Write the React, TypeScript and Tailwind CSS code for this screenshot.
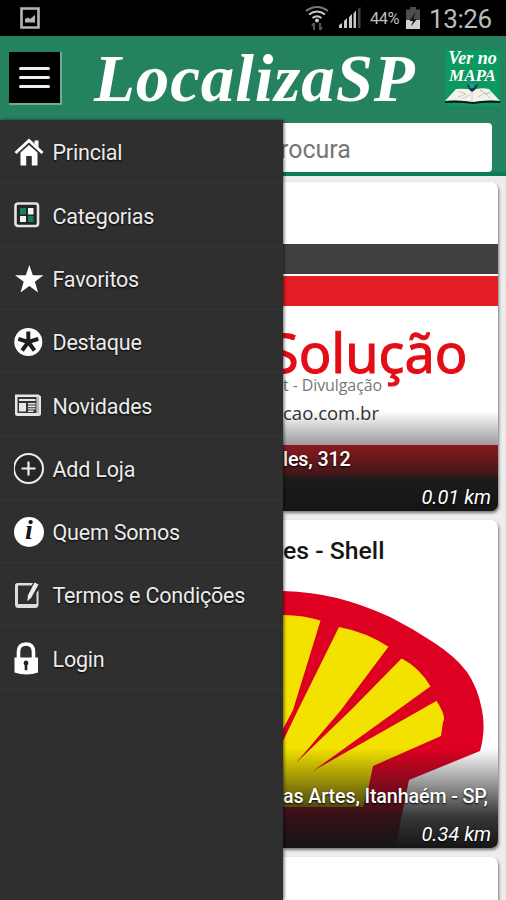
import { ReactNode } from "react";

const HomeIcon = () => (
  <svg viewBox="0 0 30 30" className="size-[30px]">
    <path d="M20.500 3.500h4v7l-4-4z" fill="#fff" />
    <path d="M1.500 16 15 3.500 28.500 16" fill="none" stroke="#fff" strokeWidth="3" />
    <path d="M6.500 15.500 15 8l8.500 7.500V28.500h-5.700V19h-5.600v9.500H6.500z" fill="#fff" />
  </svg>
);

const CategoriesIcon = () => (
  <svg viewBox="0 0 30 30" className="size-[30px]">
    <rect x="1.500" y="3.500" width="22.500" height="22.500" rx="2.500" fill="#252525" stroke="#e4e4e4" strokeWidth="2.600" />
    <path d="M6 8h6v6.500H6zM14 16h5.500v6H14z" fill="#14805c" />
    <path d="M14 8h5.500v6.500H14zM6 16h6v6H6z" fill="#f2f2f2" />
  </svg>
);

const StarIcon = () => (
  <svg viewBox="0 0 30 30" className="size-[30px]">
    <path d="m15.300 1 3.500 10.200h10.700l-8.600 6.500 3.200 10.800-8.800-6.500-8.800 6.500 3.200-10.800L1 11.200h10.800z" fill="#fff" />
  </svg>
);

const FeaturedIcon = () => (
  <svg viewBox="0 0 30 30" className="size-[30px]">
    <circle cx="14.300" cy="15" r="14" fill="#fff" />
    <g stroke="#1f1f1f" strokeWidth="4">
      <path d="M14.300 15V4.500M14.300 15l10-3.200M14.300 15l6.200 8.500M14.300 15l-6.200 8.500M14.300 15l-10-3.200" />
    </g>
  </svg>
);

const NewsIcon = () => (
  <svg viewBox="0 0 30 30" className="size-[30px]">
    <path d="M1 4.500h23.500l2.500 2v17q0 2.500-2.500 2.500H3.500Q1 26 1 23.500V4.500z" fill="#e6e6e6" />
    <path d="M3.500 7h19v16h-19z" fill="#333" />
    <path d="M5 9h16.500v2H5zM5 13h7v8.500H5zM14 13h7.500v1.600H14zM14 15.600h7.500v1.600H14zM14 18.200h7.500v1.400H14zM14 20.500h5.500V22H14z" fill="#e6e6e6" />
    <path d="M24 6.500v17" stroke="#777" strokeWidth=".8" />
  </svg>
);

const AddIcon = () => (
  <svg viewBox="0 0 32 32" className="size-8">
    <circle cx="14.500" cy="15.500" r="14.500" fill="#262626" stroke="#eee" strokeWidth="2" />
    <path d="M14.500 8.500v14M7.500 15.500h14" stroke="#eee" strokeWidth="2.200" />
  </svg>
);

const InfoIcon = () => (
  <span className="flex size-[30px] items-center justify-center rounded-full bg-white pb-[3px] font-['Liberation_Serif'] text-[28px] leading-none font-bold text-[#151515] italic">
    i
  </span>
);

const TermsIcon = () => (
  <svg viewBox="0 0 30 30" className="size-[30px]">
    <path d="M19 3H3.500Q1 3 1 5.500v19Q1 28 4.500 28H21q3.500 0 3.500-3.500V10l-2 3v11H4V5.500h13.500z" fill="#ddd" />
    <path d="m20.500 2.500 4 2-7.300 13.200-4 3.500.8-6z" fill="#ededed" />
  </svg>
);

const LockIcon = () => (
  <svg viewBox="0 0 30 36" className="h-9 w-[30px]">
    <path d="M4.500 17v-6q0-8 7.500-8t7.500 8v6" fill="none" stroke="#fff" strokeWidth="3.600" />
    <path d="M.500 16.500h23.500v15q-11.500 4-23.500 0z" fill="#fff" />
    <path d="M12 19.500a2.600 2.600 0 0 1 1.300 4.700v5h-2.600v-5a2.600 2.600 0 0 1 1.300-4.700z" fill="#222" />
  </svg>
);

const menu: { label: string; icon: ReactNode }[] = [
  { label: "Princial", icon: <HomeIcon /> },
  { label: "Categorias", icon: <CategoriesIcon /> },
  { label: "Favoritos", icon: <StarIcon /> },
  { label: "Destaque", icon: <FeaturedIcon /> },
  { label: "Novidades", icon: <NewsIcon /> },
  { label: "Add Loja", icon: <AddIcon /> },
  { label: "Quem Somos", icon: <InfoIcon /> },
  { label: "Termos e Condições", icon: <TermsIcon /> },
  { label: "Login", icon: <LockIcon /> },
];

const StatusBar = () => (
  <div className="flex h-9 shrink-0 items-center bg-black pl-5 text-[#bdbdbd]">
    <svg viewBox="0 0 20 22" className="h-[22px] w-5">
      <path d="M1.500 1.500h17v19h-17z" fill="none" stroke="#b5b5b5" strokeWidth="2.600" />
      <path d="M5 15.500v-3.500l3-1.500 2 1.500 5-4v7.500z" fill="#b5b5b5" />
    </svg>
    <div className="ml-auto flex items-center pr-[14px]">
      <svg viewBox="0 0 24 26" className="h-[26px] w-6">
        <g fill="none" stroke="#c8c8c8" strokeWidth="2">
          <path d="M1 6Q12-2 23 6" stroke="#777" />
          <path d="M4 9.500q8-6 16 0" />
          <path d="M7.500 13q4.500-3.500 9 0" />
        </g>
        <circle cx="12" cy="15.500" r="2" fill="#c8c8c8" />
        <path d="M9 25v-7m-2 3 2-3M15 18v7m2-3-2 3" stroke="#555" strokeWidth="2" fill="none" />
      </svg>
      <svg viewBox="0 0 24 22" className="ml-[9px] h-[22px] w-6">
        <path d="M1 21v-3l3-2v5zM6 21v-7l3-3v10zM11 21V10l3-3v14zM15.500 21V6.500l2.500-3V21z" fill="#c8c8c8" />
        <path d="M20 21V2l2.500-2v21z" fill="#444" />
      </svg>
      <span className="ml-[8px] w-[32px] pt-[2px] font-['Roboto'] text-[16.500px] leading-none tracking-[-0.500px]">44%</span>
      <svg viewBox="0 0 14 22" className="ml-[4px] h-[22px] w-[14px]">
        <path d="M4 0h6v2.500h4V22H0V2.500h4z" fill="#4c4c4c" />
        <path d="M0 13h14v9H0z" fill="#d0d0d0" />
        <path d="M9.500 5 3.500 14h3.500l-2 5.500 6-7.500H7.500z" fill="#161616" />
      </svg>
      <span className="ml-[9px] w-[63px] pt-[2px] font-['Roboto'] text-[26px] leading-none tracking-[-0.400px] text-[#bcbcbc]">13:26</span>
    </div>
  </div>
);

const Header = () => (
  <header className="flex h-[84px] shrink-0 items-center bg-[#25825f]">
    <button className="mb-[2px] ml-[9px] flex h-[51px] w-[51px] flex-col items-center justify-center gap-[6px] bg-black shadow-[1px_1px_0_1px_#6fae94]">
      <span className="h-[3px] w-[31px] rounded-full bg-[#eee]" />
      <span className="h-[3px] w-[31px] rounded-full bg-[#eee]" />
      <span className="h-[3px] w-[31px] rounded-full bg-[#eee]" />
    </button>
    <h1 className="ml-[34px] w-[331px] font-['Liberation_Serif'] text-[67px] leading-[84px] font-bold tracking-[0.900px] whitespace-nowrap text-white italic">
      LocalizaSP
    </h1>
    <div className="ml-5 flex h-14 w-[55px] flex-col items-center bg-[#0c9960] font-['Liberation_Serif'] text-[18px] leading-[17px] font-bold text-white italic">
      <span className="whitespace-nowrap">Ver no</span>
      <span className="text-[17px]">MAPA</span>
      <svg viewBox="0 0 55 22" className="h-[22px] w-[55px]">
        <path d="M0 17 11 5q9-1 16 1 9-3 17-1l11 12q-15-2-27 2-13-4-28-2z" fill="#f3f3ee" />
        <path d="M0 17q15-1 28 1 12-2 27-1v2q-15-1-27 1-13-2-28-1z" fill="#171717" />
        <path d="m13 7 8 3-8 3M33 13l7-4 6 6M17 15l8-4" fill="none" stroke="#d8cda0" />
        <path d="m35 6 6 4 5-2" fill="none" stroke="#9ab9d8" />
        <path d="M27 7v11" stroke="#ccc" />
        <path d="M22 0q1 5 5 8 5-3 6-8l-3 2-3-2-2 2z" fill="#16343e" />
        <circle cx="27" cy="2" r="2.500" fill="#2193a6" />
      </svg>
    </div>
  </header>
);

const Drawer = () => (
  <aside className="z-10 w-[283px] shrink-0 bg-[#2f2f2f] shadow-[1px_0_3px_rgba(0,0,0,0.6)]">
    <ul>
      {menu.map((item) => (
        <li key={item.label} className="flex h-[63.300px] items-center border-b border-[#353535] pt-[2px] pl-[14px]">
          <span className="flex w-[38.500px] items-center">{item.icon}</span>
          <span className="pt-[2px] text-[21.500px] leading-none tracking-[-0.200px] whitespace-nowrap text-[#ececec] [text-shadow:0_1px_2px_#000]">
            {item.label}
          </span>
        </li>
      ))}
    </ul>
  </aside>
);

const Shell = () => (
  <svg viewBox="283 580 215 268" className="h-[268px] w-[215px]">
    <path
      d="M283 591Q312 592 337 598 364 605 390 617 412 628 433 642 455 656 467 672 478 688 482 710 486 730 480 751L409 780 400 824 396 848H283z"
      fill="#de0021"
    />
    <path
      d="M283 615Q304 615 322 621L339 627Q366 632 389 647L401 658Q420 668 431 687L436 700Q447 717 443 722L441 736 373 766 368 790 363 807H283z"
      fill="#f3e200"
    />
    <path d="M321 619 340 625 298 710 283 741V729L293 710z" fill="#de0021" />
    <path d="M389 646 403 657 351 710 296 763 341 710z" fill="#de0021" />
    <path d="M431 686 438 700 313 771z" fill="#de0021" />
  </svg>
);

const Shade = ({ address, distance }: { address: string; distance: string }) => (
  <div className="absolute inset-x-0 bottom-0 flex h-[100px] flex-col justify-end bg-linear-to-b from-transparent via-[#151515]/85 via-68% to-[#151515] pb-[2px] text-white [text-shadow:0_1px_2px_#000]">
    <p className="text-[19.700px] leading-6 font-medium tracking-[-0.120px] whitespace-nowrap">{address}</p>
    <p className="mt-[13px] pr-[7px] text-right text-[20px] leading-6 italic">{distance}</p>
  </div>
);

const App = () => {
  return (
    <div className="flex h-[900px] w-[506px] flex-col overflow-hidden bg-[#ededed] font-['Roboto',sans-serif]">
      <StatusBar />
      <Header />
      <div className="flex min-h-0 flex-1">
        <Drawer />
        <main className="min-w-0 flex-1 overflow-hidden">
          <div className="h-14 border-b-4 border-[#0e7a55] bg-[#25825f] pt-[3px] pr-[14px]">
            <div className="flex h-[49px] items-center rounded-r-[4px] bg-white pt-1 text-[25px] text-[#757575]">
              <span className="-ml-[3px]">rocura</span>
            </div>
          </div>
          <div className="flex flex-col gap-[9px] pt-[6px] pr-2">
            <article className="relative h-[329px] shrink-0 overflow-hidden rounded-r-[7px] bg-white shadow-[1px_2px_3px_rgba(0,0,0,0.5)]">
              <div className="mt-[62px] h-[30px] bg-[#404040]" />
              <div className="mt-[2px] h-[30px] bg-[#e41e25]" />
              <p className="-ml-[14px] mt-[13px] h-[66px] font-['Noto_Sans'] text-[54px] leading-[66px] whitespace-nowrap text-[#e30d15] [-webkit-text-stroke:1px_#e30d15]">
                Solução
              </p>
              <p className="-mt-[10px] font-['Open_Sans'] text-[16px] leading-5 tracking-[-0.100px] text-[#777]">t - Divulgação</p>
              <p className="mt-[6px] font-['Open_Sans'] text-[18.500px] leading-6 text-[#333]">cao.com.br</p>
              <div className="mt-[20px] h-[32px] bg-[#e41e25]" />
              <div className="h-9 bg-[#404040]" />
              <Shade address="les, 312" distance="0.01 km" />
            </article>
            <article className="relative flex h-[328px] shrink-0 flex-col justify-between overflow-hidden rounded-r-[7px] bg-white shadow-[1px_2px_3px_rgba(0,0,0,0.5)]">
              <h2 className="h-[60px] pt-[17px] text-[24.800px] leading-7 font-medium text-[#161616]">es - Shell</h2>
              <Shell />
              <Shade address="as Artes, Itanhaém - SP," distance="0.34 km" />
            </article>
            <article className="h-[60px] shrink-0 rounded-r-[7px] bg-white shadow-[1px_2px_3px_rgba(0,0,0,0.5)]" />
          </div>
        </main>
      </div>
    </div>
  );
};

export default App;
